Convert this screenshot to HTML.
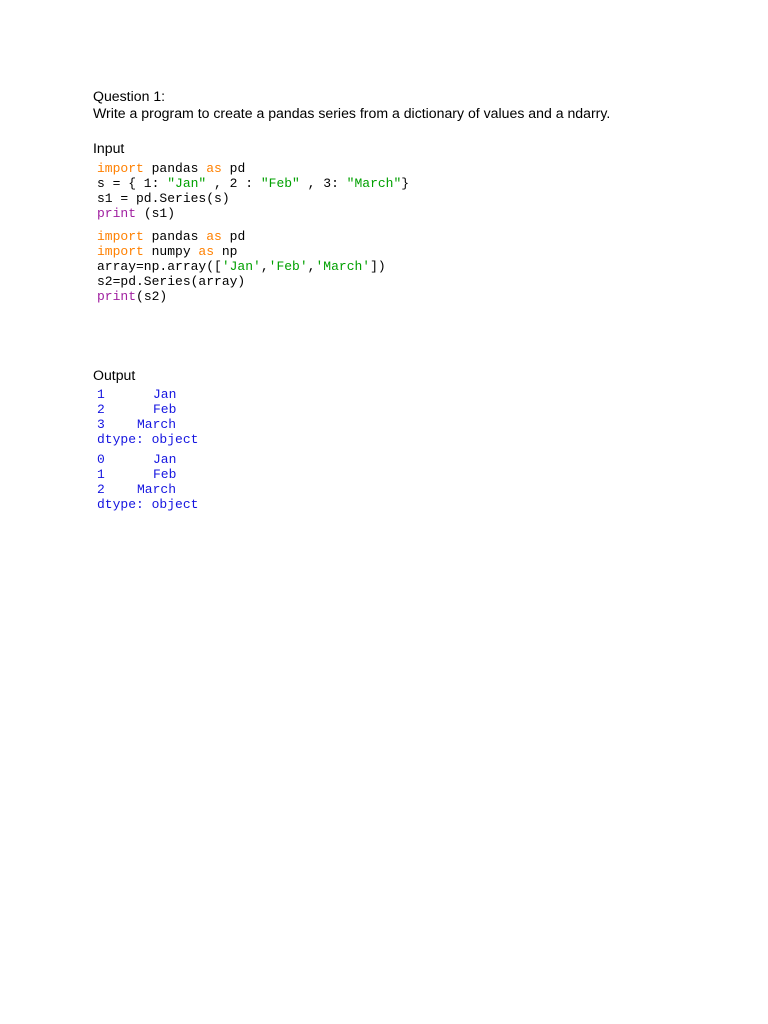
<!DOCTYPE html>
<html><head><style>
body{margin:0;background:#fff;width:768px;height:1024px;position:relative;}
.t{position:absolute;left:93px;font-family:"Liberation Sans",sans-serif;font-size:14.1px;color:#000;line-height:17px;}
.c{position:absolute;left:97px;font-family:"Liberation Mono",monospace;font-size:13px;line-height:15px;white-space:pre;color:#000;}
.o{color:#ff8000}.g{color:#00a000}.p{color:#a020a0}.b{color:#1515e0}
.v{position:absolute;font-family:"Liberation Mono",monospace;font-size:13px;line-height:15px;white-space:pre;color:#1515e0;}
</style></head><body>
<div class="t" style="top:88px">Question 1:</div>
<div class="t" style="top:105px">Write a program to create a pandas series from a dictionary of values and a ndarry.</div>
<div class="t" style="top:140px">Input</div>
<div class="c" style="top:161px"><span class="o">import</span> pandas <span class="o">as</span> pd
s = { 1: <span class="g">"Jan"</span> , 2 : <span class="g">"Feb"</span> , 3: <span class="g">"March"</span>}
s1 = pd.Series(s)
<span class="p">print</span> (s1)</div>
<div class="c" style="top:229px"><span class="o">import</span> pandas <span class="o">as</span> pd
<span class="o">import</span> numpy <span class="o">as</span> np
array=np.array([<span class="g">'Jan'</span>,<span class="g">'Feb'</span>,<span class="g">'March'</span>])
s2=pd.Series(array)
<span class="p">print</span>(s2)</div>
<div class="t" style="top:367px">Output</div>
<div class="v" style="top:387px;left:97px">1
2
3
dtype: object</div>
<div class="v" style="top:387px;left:153px">Jan
Feb</div>
<div class="v" style="top:417px;left:137px">March</div>
<div class="v" style="top:452px;left:97px">0
1
2
dtype: object</div>
<div class="v" style="top:452px;left:153px">Jan
Feb</div>
<div class="v" style="top:482px;left:137px">March</div>
</body></html>
